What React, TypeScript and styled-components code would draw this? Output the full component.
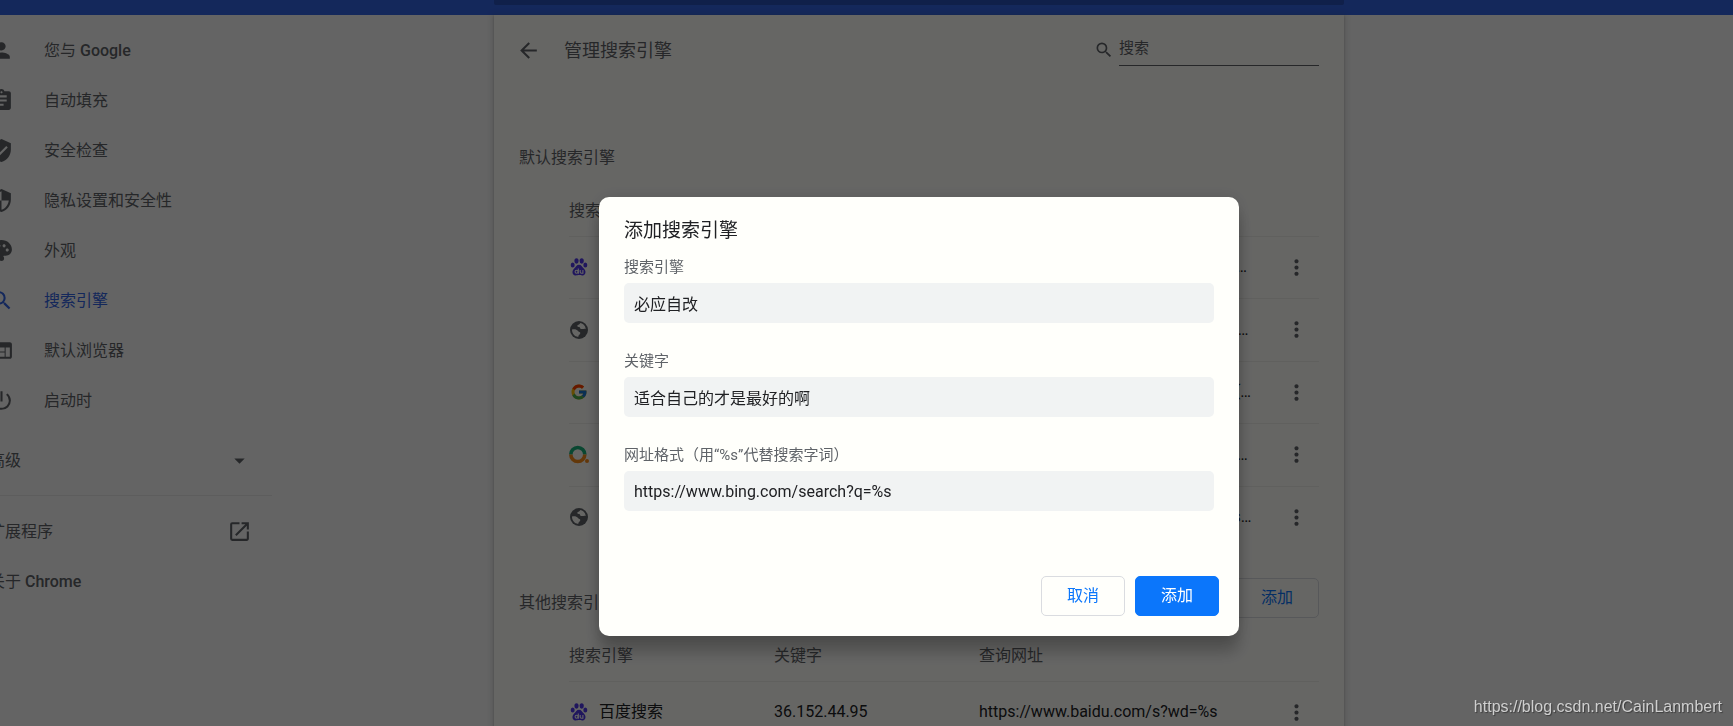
import React, { type ReactNode } from "react";
import styled, { createGlobalStyle, css } from "styled-components";
import type { IconType } from "react-icons";
import {
  MdArrowBack,
  MdArrowDropDown,
  MdAssignment,
  MdMoreVert,
  MdOpenInNew,
  MdPalette,
  MdPerson,
  MdPowerSettingsNew,
  MdSearch,
  MdSecurity,
  MdVerifiedUser,
  MdWeb,
} from "react-icons/md";
import { FcGoogle } from "react-icons/fc";

const color = {
  page: "#fafafa",
  card: "#fffffb",
  brand: "#3464e4",
  brandDark: "#2850b9",
  text: "#202124",
  muted: "#5f6368",
  line: "#f0f0ec",
  border: "#dadce0",
  field: "#f1f3f3",
  action: "#0b76fb",
  paw: "#5038e8",
};

const GlobalStyle = createGlobalStyle`
  *, *::before, *::after { box-sizing: border-box; }
  html, body { margin: 0; overflow: hidden; background: ${color.page}; }
  body, button, input {
    font-family: Roboto, "Noto Sans CJK SC", sans-serif;
    font-size: 16px;
    line-height: 24px;
    color: ${color.text};
  }
  h1, h2 { margin: 0; font-weight: 400; }
  svg { display: block; flex: none; }
`;

/* The page is wider than the window: its right-hand strip is scrolled out of view. */
const Shell = styled.div`
  height: 100vh;
  margin-right: -105px;
  overflow: hidden;
`;

const Toolbar = styled.header`
  display: flex;
  justify-content: center;
  align-items: flex-start;
  height: 15px;
  background: ${color.brand};
`;

const ToolbarSearch = styled.div`
  width: 850px;
  height: 5px;
  border-radius: 0 0 2px 2px;
  background: ${color.brandDark};
`;

const Columns = styled.div`
  display: grid;
  grid-template-columns: minmax(0, 1fr) 850px minmax(0, 1fr);
  min-height: calc(100vh - 15px);
`;

const Sidebar = styled.nav`
  width: 313px;
  margin-left: -41px;
  padding-top: 10px;
`;

const navRow = css`
  display: flex;
  align-items: center;
  width: 100%;
  height: 50px;
  padding: 0 20px 0 30px;
  border: 0;
  background: none;
  color: ${color.muted};
  text-decoration: none;
`;

const NavLink = styled.a<{ $selected?: boolean }>`
  ${navRow}
  gap: 30px;
  ${({ $selected }) => $selected && `color: ${color.brand};`}
`;

const FooterLink = styled.a`
  ${navRow}
  justify-content: space-between;
`;

const AdvancedToggle = styled.button`
  ${navRow}
  justify-content: space-between;
  margin: 10px 0;
`;

const NavLabel = styled.span`
  padding-top: 2px;
`;

const Brand = styled.span`
  font-weight: 500;
`;

const Divider = styled.hr`
  height: 1px;
  margin: 0 0 10px;
  border: 0;
  background: #e8e8e8;
`;

const Card = styled.main`
  background: ${color.card};
  box-shadow: 0 1px 2px rgba(60, 64, 67, 0.3), 0 1px 6px 2px rgba(60, 64, 67, 0.15);
`;

const CardHeader = styled.div`
  display: flex;
  align-items: center;
  height: 70px;
  margin-bottom: 38px;
  padding: 0 25px 0 22px;
`;

const IconButton = styled.button`
  display: grid;
  place-items: center;
  padding: 0;
  border: 0;
  background: none;
  color: ${color.muted};
`;

const CardTitle = styled.h1`
  flex: 1;
  padding: 2px 0 0 23px;
  font-size: 18px;
  color: ${color.muted};
`;

const SearchBox = styled.label`
  display: flex;
  align-items: center;
  gap: 5px;
  color: ${color.muted};
`;

const SearchInput = styled.input`
  width: 200px;
  height: 32px;
  padding: 0 0 4px;
  border: 0;
  border-bottom: 1px solid ${color.muted};
  background: none;
  font-size: 15px;
  outline: none;

  &::placeholder {
    color: ${color.muted};
    opacity: 1;
  }
`;

const Section = styled.section`
  padding: 0 25px;
  margin-bottom: 20px;
`;

const SectionHeader = styled.div`
  display: flex;
  align-items: center;
  justify-content: space-between;
  height: 60px;
`;

const SectionTitle = styled.h2`
  padding-top: 10px;
  font-size: 16px;
  color: ${color.muted};
`;

const EngineTable = styled.table`
  width: calc(100% - 50px);
  margin-left: 50px;
  table-layout: fixed;
  border-collapse: collapse;

  th {
    height: 53px;
    padding: 4px 0 0;
    font-weight: 400;
    text-align: left;
    color: ${color.muted};
  }

  td {
    height: 62px;
    padding: 0;
  }

  tr:nth-child(even) td {
    height: 63px;
  }

  tbody tr {
    border-top: 1px solid ${color.line};
  }
`;

const Column = styled.col<{ $width?: string }>`
  width: ${({ $width }) => $width ?? "auto"};
`;

const EngineName = styled.div`
  display: flex;
  align-items: center;
  gap: 10px;
`;

const Url = styled.div`
  overflow: hidden;
  white-space: nowrap;
  text-overflow: ellipsis;
`;

const MenuCell = styled.td`
  ${IconButton} {
    width: 45px;
    height: 45px;
    margin-left: auto;
  }
`;

const Button = styled.button<{ $primary?: boolean }>`
  width: 84px;
  height: 40px;
  padding: 0;
  border: 1px solid ${({ $primary }) => ($primary ? color.action : color.border)};
  border-radius: 5px;
  background: ${({ $primary }) => ($primary ? color.action : "transparent")};
  color: ${({ $primary }) => ($primary ? "#ffffff" : color.action)};
`;

const Backdrop = styled.div`
  position: fixed;
  inset: 0 -105px 0 0;
  display: flex;
  justify-content: center;
  align-items: flex-start;
  padding-top: 197px;
  background: rgba(0, 0, 0, 0.6);
`;

const Dialog = styled.form`
  width: 640px;
  padding: 21px 20px 20px 25px;
  border-radius: 10px;
  background: ${color.card};
  box-shadow: 0 0 16px rgba(0, 0, 0, 0.12), 0 16px 16px rgba(0, 0, 0, 0.24);
`;

const DialogTitle = styled.h2`
  margin-bottom: 13px;
  font-size: 19px;
  line-height: 26px;
`;

const Field = styled.label`
  display: grid;
  gap: 6px;
  margin: 0 5px 28px 0;
  font-size: 15px;
  line-height: 20px;
  color: ${color.muted};
`;

const FieldInput = styled.input`
  width: 100%;
  height: 40px;
  padding: 0 10px;
  border: 0;
  border-radius: 5px;
  background: ${color.field};
  outline: none;
`;

const DialogActions = styled.div`
  display: flex;
  justify-content: flex-end;
  gap: 10px;
  padding-top: 37px;
`;

const Watermark = styled.div`
  position: fixed;
  right: 11px;
  bottom: 7px;
  font-family: "Liberation Sans", sans-serif;
  font-size: 16px;
  color: #cfcfcf;
  text-shadow: 1px 1px 1px rgba(0, 0, 0, 0.4);
`;

const Globe = () => (
  <svg width="20" height="20" viewBox="0 0 20 20" aria-hidden="true">
    <circle cx="10" cy="10" r="9" fill={color.muted} />
    <path
      d="M3 9.6 C5 8.8 8 9.4 8.8 10.8 C9.4 12.2 11.4 11.6 11.3 13.2 C11.2 14.6 9.4 14.6 9.2 16.9 C5.6 16.7 2.9 13.7 3 9.6 Z M10.9 3.1 C11.6 4 9.6 4.9 8.6 5.3 C7.6 5.9 8.6 7 9.9 6.9 C11.5 6.8 10.6 8.4 11.9 8.9 C13.6 9.4 14.8 8.4 16.8 8.9 C16.3 5.7 13.9 3.4 10.9 3.1 Z"
      fill={color.card}
    />
  </svg>
);

const QihooMark = () => (
  <svg width="20" height="20" viewBox="0 0 20 20" overflow="visible" aria-hidden="true">
    <path d="M1.8 9.5 A7 7 0 0 1 15.8 9.5" fill="none" stroke="#19b27b" strokeWidth="3.6" />
    <path d="M1.8 9.5 A7 7 0 0 0 15.8 9.5" fill="none" stroke="#f88c1b" strokeWidth="3.6" />
    <circle cx="18" cy="16" r="2" fill="#f88c1b" />
  </svg>
);

/* Paw mark: four toes, the pad, and the light strokes on the pad. */
const Baidu = () => (
  <svg width="20" height="20" viewBox="0 0 20 20" aria-hidden="true">
    <g fill={color.paw}>
      <ellipse cx="7.5" cy="4" rx="2.1" ry="2.7" />
      <ellipse cx="12.7" cy="4" rx="2.1" ry="2.7" />
      <ellipse cx="3.7" cy="8" rx="2" ry="2.5" />
      <ellipse cx="16.3" cy="8" rx="2" ry="2.5" />
      <path d="M10 7.8 C12.4 7.8 13 10 14.8 11.5 C17.4 13.7 17 18.2 13.6 18.4 C12 18.5 11.2 18 10 18 C8.8 18 8 18.5 6.4 18.4 C3 18.2 2.6 13.7 5.2 11.5 C7 10 7.6 7.8 10 7.8 Z" />
    </g>
    <g fill="none" stroke={color.card} strokeWidth="1.1">
      <circle cx="7.6" cy="14.8" r="1.5" />
      <path d="M9.3 11.4 V16.7 M11.2 13.1 V15.1 Q11.2 16.3 12.4 16.3 H13.8 M13.9 13.1 V16.8" />
    </g>
  </svg>
);

const GoogleIcon = styled(FcGoogle)`
  margin: 1px;
`;

const navItems: { label: ReactNode; id: string; icon: IconType; selected?: boolean }[] = [
  { id: "people", label: <>您与 <Brand>Google</Brand></>, icon: MdPerson },
  { id: "autofill", label: "自动填充", icon: MdAssignment },
  { id: "safety", label: "安全检查", icon: MdVerifiedUser },
  { id: "privacy", label: "隐私设置和安全性", icon: MdSecurity },
  { id: "appearance", label: "外观", icon: MdPalette },
  { id: "search", label: "搜索引擎", icon: MdSearch, selected: true },
  { id: "browser", label: "默认浏览器", icon: MdWeb },
  { id: "startup", label: "启动时", icon: MdPowerSettingsNew },
];

interface Engine {
  name: string;
  keyword: string;
  url: string;
  icon: ReactNode;
}

const defaultEngines: Engine[] = [
  { name: "百度", keyword: "baidu.com", url: "https://www.baidu.com/s?wd=%s&nm=10", icon: <Baidu /> },
  { name: "搜狗", keyword: "sogou.com", url: "https://cn.sogou.com/web?q=%s&cfm=10", icon: <Globe /> },
  { name: "Google", keyword: "google.com", url: "{google:baseURL}search?q=%s&rlz={google:RLZ}", icon: <GoogleIcon size={18} /> },
  { name: "360", keyword: "so.com", url: "https://www.so.com/s?q=%s&src=ipc&ie=utf-8", icon: <QihooMark /> },
  { name: "必应", keyword: "bing.com", url: "https://cn.bing.com/search?q=%s&isAPI=1", icon: <Globe /> },
];

const otherEngines: Engine[] = [
  { name: "百度搜索", keyword: "36.152.44.95", url: "https://www.baidu.com/s?wd=%s", icon: <Baidu /> },
];

const fields = [
  { id: "engine-name", label: "搜索引擎", value: "必应自改" },
  { id: "engine-keyword", label: "关键字", value: "适合自己的才是最好的啊" },
  { id: "engine-url", label: "网址格式（用“%s”代替搜索字词）", value: "https://www.bing.com/search?q=%s" },
];

function EngineList({ title, engines, action }: { title: string; engines: Engine[]; action?: ReactNode }) {
  return (
    <Section>
      <SectionHeader>
        <SectionTitle>{title}</SectionTitle>
        {action}
      </SectionHeader>
      <EngineTable>
        <colgroup>
          <Column $width="205px" />
          <Column $width="205px" />
          <Column />
          <Column $width="66px" />
        </colgroup>
        <thead>
          <tr>
            <th scope="col">搜索引擎</th>
            <th scope="col">关键字</th>
            <th scope="col" colSpan={2}>查询网址</th>
          </tr>
        </thead>
        <tbody>
          {engines.map((engine) => (
            <tr key={engine.name}>
              <td>
                <EngineName>
                  {engine.icon}
                  {engine.name}
                </EngineName>
              </td>
              <td>{engine.keyword}</td>
              <td>
                <Url>{engine.url}</Url>
              </td>
              <MenuCell>
                <IconButton type="button" aria-label="更多操作">
                  <MdMoreVert size={25} />
                </IconButton>
              </MenuCell>
            </tr>
          ))}
        </tbody>
      </EngineTable>
    </Section>
  );
}

export default function App() {
  return (
    <>
      <GlobalStyle />
      <Shell>
        <Toolbar>
          <ToolbarSearch />
        </Toolbar>
        <Columns>
          <Sidebar>
            {navItems.map(({ id, label, icon: Icon, selected }) => (
              <NavLink key={id} href={`#${id}`} $selected={selected}>
                <Icon size={25} />
                <NavLabel>{label}</NavLabel>
              </NavLink>
            ))}
            <AdvancedToggle type="button">
              <NavLabel>高级</NavLabel>
              <MdArrowDropDown size={25} />
            </AdvancedToggle>
            <Divider />
            <FooterLink href="#extensions">
              <NavLabel>扩展程序</NavLabel>
              <MdOpenInNew size={25} />
            </FooterLink>
            <FooterLink href="#about">
              <NavLabel>
                关于 <Brand>Chrome</Brand>
              </NavLabel>
            </FooterLink>
          </Sidebar>
          <Card>
            <CardHeader>
              <IconButton type="button" aria-label="返回">
                <MdArrowBack size={25} />
              </IconButton>
              <CardTitle>管理搜索引擎</CardTitle>
              <SearchBox>
                <MdSearch size={20} />
                <SearchInput type="search" placeholder="搜索" aria-label="搜索" />
              </SearchBox>
            </CardHeader>
            <EngineList title="默认搜索引擎" engines={defaultEngines} />
            <EngineList
              title="其他搜索引擎"
              engines={otherEngines}
              action={<Button type="button">添加</Button>}
            />
          </Card>
        </Columns>
      </Shell>
      <Backdrop>
        <Dialog role="dialog" aria-modal="true" aria-labelledby="dialog-title">
          <DialogTitle id="dialog-title">添加搜索引擎</DialogTitle>
          {fields.map((field) => (
            <Field key={field.id} htmlFor={field.id}>
              {field.label}
              <FieldInput id={field.id} type="text" defaultValue={field.value} />
            </Field>
          ))}
          <DialogActions>
            <Button type="button">取消</Button>
            <Button type="button" $primary>
              添加
            </Button>
          </DialogActions>
        </Dialog>
      </Backdrop>
      <Watermark>https://blog.csdn.net/CainLanmbert</Watermark>
    </>
  );
}
